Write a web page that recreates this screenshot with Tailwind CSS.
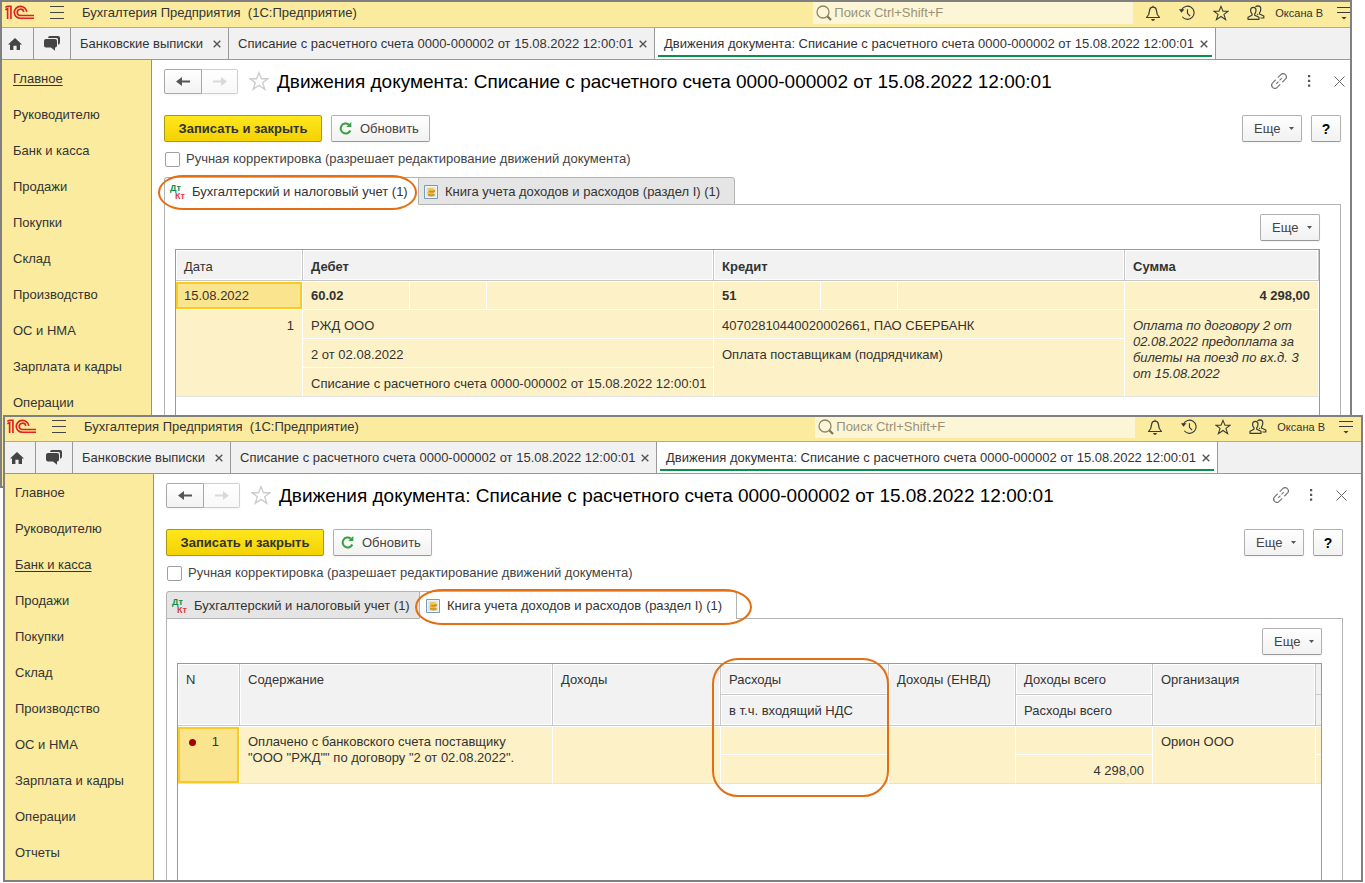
<!DOCTYPE html>
<html lang="ru">
<head>
<meta charset="utf-8">
<meta name="viewport" content="width=device-width, initial-scale=1">
<title>Бухгалтерия Предприятия</title>
<script src="https://cdn.jsdelivr.net/npm/@tailwindcss/browser@4"></script>
</head>
<body class="relative h-screen overflow-hidden bg-white font-['Liberation_Sans',Arial,sans-serif] text-[13px] leading-4 text-[#333]">

<!-- Shared icons -->
<svg class="hidden" aria-hidden="true">
  <symbol id="logo" viewBox="0 0 88 44"><g fill="none" stroke="#e0201f" stroke-width="5"><path d="M1 14 L8 10 V42"/><path d="M1 6 L8 3 H18 V42"/><path d="M66 20 A19 18 0 1 0 47 39.500 H88"/><path d="M57 20 A10 9.500 0 1 0 47 31 H88"/></g></symbol>
  <symbol id="burger" viewBox="0 0 14 13"><path d="M0 .5H14M0 6.500H14M0 12.500H14" stroke="#444" fill="none"/></symbol>
  <symbol id="search" viewBox="0 0 16 16"><circle cx="7" cy="7" r="6" fill="none" stroke="#8f8868" stroke-width="1.300"/><path d="M11.500 11.500L15 15" stroke="#7c7657" stroke-width="2.200"/></symbol>
  <symbol id="bell" viewBox="0 0 16 16"><path d="M8 .8V2.200M1.500 12.500H14.500L12.300 9.500L11.300 5Q10.800 2.200 8 2.200Q5.200 2.200 4.700 5L3.700 9.500Z" fill="none" stroke="#3a3a3a" stroke-width="1.200" stroke-linejoin="round"/><path d="M6 14h4l-1 1.700H7z" fill="#3a3a3a"/></symbol>
  <symbol id="history" viewBox="0 0 17 17"><path d="M2.600 5.500A7 7 0 1 1 3.500 12.500" fill="none" stroke="#3a3a3a" stroke-width="1.200"/><path d="M0 4.500H5.800L2.600 8.200Z" fill="#3a3a3a"/><path d="M9 4.500V8.800L11.800 11.800" fill="none" stroke="#3a3a3a" stroke-width="1.200"/></symbol>
  <symbol id="star" viewBox="0 0 18 18"><path d="M9 1.500L11.200 7H17L12.300 10.500L14.200 16.500L9 12.900L3.800 16.500L5.700 10.500L1 7H6.800Z" fill="none" stroke="currentColor" stroke-width="1.200" stroke-linejoin="miter"/></symbol>
  <symbol id="users" viewBox="0 0 18 16"><g fill="none" stroke="#3a3a3a" stroke-width="1.200" stroke-linejoin="round"><path d="M1 14.300V12.300L5 10.300V9Q3.300 7.200 3.600 4.800Q3.900 2.300 6.300 2.300Q8.800 2.300 9 4.800Q9.200 7.200 7.700 9V10.300L12 12.300V14.300Z"/><path d="M8.500 2Q9.300 .8 11 .8Q13.600 .9 13.800 3.500Q14 6 12.500 7.800V9L16.800 11V13H13.500M10.200 9.800L11 9"/></g></symbol>
  <symbol id="settings" viewBox="0 0 14 14"><path d="M0 1.500H14M0 6.500H14" stroke="#3a3a3a" stroke-width="1.200"/><path d="M4.500 11H9.500L7 13.600Z" fill="#3a3a3a"/></symbol>
  <symbol id="home" viewBox="0 0 14 12"><path d="M7 0L14 6.600H12V12H8.600V7.800H5.400V12H2V6.600H0Z" fill="#444"/></symbol>
  <symbol id="chat" viewBox="0 0 16 15"><path d="M4 2Q4 0 6 0H14Q16 0 16 2V6.500Q16 8.500 14 8.700V3.500Q14 2 12.500 2Z" fill="#444"/><path d="M2 3H11.200Q13 3 13 5V9.500Q13 11.500 11.200 11.500H11V14.800L7 11.500H2Q0 11.500 0 9.500V5Q0 3 2 3Z" fill="#444"/></symbol>
  <symbol id="x" viewBox="0 0 8 8"><path d="M.7 .7L7.300 7.300M7.300 .7L.7 7.300" stroke="#555" stroke-width="1.400"/></symbol>
  <symbol id="bigx" viewBox="0 0 11 11"><path d="M.5 .5L10.500 10.500M10.500 .5L.5 10.500" stroke="#666" stroke-width="1"/></symbol>
  <symbol id="left" viewBox="0 0 14 11"><path d="M14 5.500H4" stroke="currentColor" stroke-width="2"/><path d="M0 5.500L6 1V10Z" fill="currentColor"/></symbol>
  <symbol id="right" viewBox="0 0 14 11"><path d="M0 5.500H10" stroke="currentColor" stroke-width="2"/><path d="M14 5.500L8 1V10Z" fill="currentColor"/></symbol>
  <symbol id="link" viewBox="0 0 16 16"><g fill="none" stroke="#777" stroke-width="1.200" transform="rotate(-45 8 8)"><path d="M6.500 4.800H2.200A3.200 3.200 0 0 0 2.200 11.200H6.500"/><path d="M9.500 4.800H13.800A3.200 3.200 0 0 1 13.800 11.200H9.500"/><path d="M4 8H7.200M8.800 8H12"/></g></symbol>
  <symbol id="dots" viewBox="0 0 4 12"><path d="M1 0h2.200v2.200h-2.200zM1 4.800h2.200v2.200h-2.200zM1 9.600h2.200v2.200h-2.200z" fill="#555"/></symbol>
  <symbol id="refresh" viewBox="0 0 13 13"><path d="M9.800 2.600A5 5 0 1 0 11.300 8.500" fill="none" stroke="#34a13c" stroke-width="2"/><path d="M7.300 4.900H12.300V0Z" fill="#34a13c"/></symbol>
  <symbol id="caret" viewBox="0 0 5 3"><path d="M0 0H5L2.500 3Z" fill="#555"/></symbol>
  <symbol id="book" viewBox="0 0 14 14"><path d="M.5 .5H13.500V13.500H.5Z" fill="#d9e8f3" stroke="#7d9ab0"/><path d="M1.500 1.500H12.500V12.500H1.500Z" fill="none" stroke="#f4f9fc" stroke-width=".8"/><ellipse cx="7.300" cy="9.800" rx="3.600" ry="1.600" fill="#d99a1c"/><ellipse cx="6.600" cy="7.600" rx="3.400" ry="1.500" fill="#eebb3a"/><ellipse cx="7.800" cy="6" rx="3.300" ry="1.500" fill="#cf8f17"/><ellipse cx="6.800" cy="4.400" rx="3.300" ry="1.400" fill="#f3c648"/></symbol>
</svg>

<!-- Rear window: accounting movements -->
<section class="absolute top-0 right-[13px] left-0 flex h-[488px] overflow-hidden border-2 border-[#808080] bg-white">
  <div class="-mr-[9px] flex min-w-0 flex-1 flex-col">
    <header class="flex h-[26px] shrink-0 items-center border-b border-[#b9ac68] bg-[#fbeb9e] pr-2 pb-1 pl-[3px]">
      <svg class="h-[15px] w-[29px]"><use href="#logo"/></svg>
      <button class="ml-4" aria-label="Меню"><svg class="h-[13px] w-[14px]"><use href="#burger"/></svg></button>
      <span class="ml-[18px] whitespace-pre">Бухгалтерия Предприятия  (1С:Предприятие)</span>
      <label class="mr-3 ml-auto flex h-[22px] w-80 items-center gap-[2px] self-start bg-[#fdf6d6] pl-[3px]">
        <svg class="size-4"><use href="#search"/></svg>
        <input type="search" aria-label="Поиск" placeholder="Поиск Ctrl+Shift+F" class="min-w-0 flex-1 bg-transparent outline-none placeholder:text-[#9a9276]">
      </label>
      <div class="flex items-center gap-[18px] text-[#3a3a3a]">
        <button aria-label="Уведомления"><svg class="size-4"><use href="#bell"/></svg></button>
        <button aria-label="История"><svg class="size-4"><use href="#history"/></svg></button>
        <button aria-label="Избранное"><svg class="size-4"><use href="#star"/></svg></button>
        <button aria-label="Пользователи"><svg class="h-4 w-[18px]"><use href="#users"/></svg></button>
      </div>
      <button class="ml-[10px] text-[11px]">Оксана В</button>
      <button class="ml-[14px]" aria-label="Настройки"><svg class="size-[14px]"><use href="#settings"/></svg></button>
    </header>

    <nav class="flex h-8 shrink-0 border-b border-[#999] bg-[#f1f1f1]" aria-label="Открытые окна">
      <button class="flex w-8 items-center justify-center border-r border-[#999] pr-[6px]" aria-label="Начальная страница"><svg class="h-3 w-[14px]"><use href="#home"/></svg></button>
      <button class="flex w-[37px] items-center justify-center border-r border-[#999]" aria-label="Обсуждения"><svg class="h-[15px] w-4"><use href="#chat"/></svg></button>
      <div class="flex w-[158px] items-center justify-between border-r border-[#999] pt-px pr-[7px] pl-[9px]"><a href="#">Банковские выписки</a><button aria-label="Закрыть"><svg class="size-2"><use href="#x"/></svg></button></div>
      <div class="flex w-[426px] items-center justify-between border-r border-[#999] pt-px pr-[7px] pl-[9px] whitespace-nowrap"><a href="#">Списание с расчетного счета 0000-000002 от 15.08.2022 12:00:01</a><button aria-label="Закрыть"><svg class="size-2"><use href="#x"/></svg></button></div>
      <div class="flex w-[561px] flex-col border-r border-[#999] bg-white px-[3px] pb-[2px] whitespace-nowrap">
        <div class="flex flex-1 items-center justify-between border-b-2 border-[#0c8f48] pt-1 pr-1 pl-[6px]"><a href="#">Движения документа: Списание с расчетного счета 0000-000002 от 15.08.2022 12:00:01</a><button aria-label="Закрыть"><svg class="size-2"><use href="#x"/></svg></button></div>
      </div>
    </nav>

    <div class="flex min-h-0 flex-1">
      <nav class="w-[150px] shrink-0 overflow-hidden border-r border-[#9b9461] bg-[#fbeb9e] pt-px pl-[11px]" aria-label="Разделы">
        <ul>
          <li class="flex h-9 items-center"><a href="#" class="underline underline-offset-2">Главное</a></li>
          <li class="flex h-9 items-center"><a href="#">Руководителю</a></li>
          <li class="flex h-9 items-center"><a href="#">Банк и касса</a></li>
          <li class="flex h-9 items-center"><a href="#">Продажи</a></li>
          <li class="flex h-9 items-center"><a href="#">Покупки</a></li>
          <li class="flex h-9 items-center"><a href="#">Склад</a></li>
          <li class="flex h-9 items-center"><a href="#">Производство</a></li>
          <li class="flex h-9 items-center"><a href="#">ОС и НМА</a></li>
          <li class="flex h-9 items-center"><a href="#">Зарплата и кадры</a></li>
          <li class="flex h-9 items-center"><a href="#">Операции</a></li>
        </ul>
      </nav>

      <main class="flex min-w-0 flex-1 flex-col pt-[9px] pr-[18px] pl-3">
        <div class="flex h-6 items-center">
          <div class="flex h-[25px]">
            <button class="flex w-[38px] items-center justify-center rounded-l-[2px] border border-[#a9a9a9] bg-linear-to-b from-white to-[#f2f2f2] text-[#555] shadow-xs" aria-label="Назад"><svg class="h-[11px] w-[14px]"><use href="#left"/></svg></button>
            <button class="flex w-9 items-center justify-center rounded-r-[2px] border border-l-0 border-[#cfcfcf] bg-linear-to-b from-white to-[#f8f8f8] text-[#d9d9d9] shadow-xs" aria-label="Вперед"><svg class="h-[11px] w-[14px]"><use href="#right"/></svg></button>
          </div>
          <button class="ml-[11px] text-[#ccc]" aria-label="В избранное"><svg class="size-5"><use href="#star"/></svg></button>
          <h1 class="ml-2 pt-[2px] text-[19px] leading-6 whitespace-nowrap text-black">Движения документа: Списание с расчетного счета 0000-000002 от 15.08.2022 12:00:01</h1>
          <div class="-mr-1 ml-auto flex items-center">
            <button aria-label="Ссылка"><svg class="size-4"><use href="#link"/></svg></button>
            <button class="ml-5" aria-label="Еще действия"><svg class="h-3 w-1"><use href="#dots"/></svg></button>
            <button class="ml-[23px]" aria-label="Закрыть"><svg class="size-[11px]"><use href="#bigx"/></svg></button>
          </div>
        </div>

        <div class="mt-[22px] flex h-[27px] gap-[9px]">
          <button class="w-[158px] rounded-[2px] border border-[#a99a12] bg-linear-to-b from-[#ffe71c] to-[#f3d200] font-bold shadow-xs">Записать и закрыть</button>
          <button class="flex w-[99px] items-center gap-2 rounded-[2px] border border-[#b0b0b0] border-b-[#999] bg-linear-to-b from-white to-[#f1f1f1] pl-[7px] text-[#444] shadow-xs"><svg class="size-[13px]"><use href="#refresh"/></svg>Обновить</button>
          <button class="ml-auto flex w-[60px] items-center gap-[9px] rounded-[2px] border border-[#b0b0b0] border-b-[#999] bg-linear-to-b from-white to-[#f1f1f1] pl-[11px] text-[#444] shadow-xs">Еще<svg class="h-[3px] w-[5px]"><use href="#caret"/></svg></button>
          <button class="w-[30px] rounded-[2px] border border-[#b0b0b0] border-b-[#999] bg-linear-to-b from-white to-[#f1f1f1] text-sm font-bold text-black shadow-xs" aria-label="Справка">?</button>
        </div>

        <label class="mt-[9px] flex h-4 items-center gap-[6px] self-start pl-px text-[#444]">
          <input type="checkbox" class="size-[15px] appearance-none rounded-[2px] border border-[#a0a0a0] bg-white">
          Ручная корректировка (разрешает редактирование движений документа)
        </label>

        <div class="mt-[10px] -mb-px flex h-7" role="tablist">
          <button role="tab" aria-selected="true" class="relative flex w-[254px] items-center gap-[6px] rounded-tl-[3px] border border-r-0 border-b-0 border-[#b3b3b3] bg-white pl-[5px] whitespace-nowrap">
            <span class="flex w-4 flex-col text-left text-[9px] leading-2 font-bold" aria-hidden="true"><span class="text-[#0c8f48]">Дт</span><span class="pl-[5px] text-[#d63c3c]">Кт</span></span>Бухгалтерский и налоговый учет (1)
            <span class="absolute -top-[3px] right-px -bottom-[5px] -left-[7px] z-10 rounded-[26px/18px] border-2 border-[#e36f12]"></span>
          </button>
          <button role="tab" aria-selected="false" class="flex w-[317px] items-center gap-[7px] rounded-tr-[3px] border border-[#b3b3b3] bg-[#e5e5e5] pt-px pl-[5px] whitespace-nowrap">
            <svg class="size-[14px]"><use href="#book"/></svg>Книга учета доходов и расходов (раздел I) (1)
          </button>
          <span class="flex-1 border-b border-[#b3b3b3]"></span>
        </div>

        <div class="flex min-h-0 flex-1 flex-col border-x border-[#b3b3b3] pt-[10px] pr-5 pl-[10px]">
          <button class="flex h-[27px] w-[60px] shrink-0 items-center gap-[9px] self-end rounded-[2px] border border-[#b0b0b0] border-b-[#999] bg-linear-to-b from-white to-[#f1f1f1] pl-[11px] text-[#444] shadow-xs">Еще<svg class="h-[3px] w-[5px]"><use href="#caret"/></svg></button>
          <div class="mt-2 flex-1 border-x border-t border-[#999]">
            <table class="w-full table-fixed border-separate border-spacing-0 text-left">
              <colgroup><col class="w-[127px]"><col class="w-[107px]"><col class="w-[77px]"><col class="w-[227px]"><col class="w-[107px]"><col class="w-[77px]"><col class="w-[227px]"><col></colgroup>
              <thead>
                <tr class="h-[31px]">
                  <th class="border-r border-b border-[#c8c8c8] bg-[#f2f2f2] px-2 pt-[3px] font-normal inset-ring inset-ring-white">Дата</th>
                  <th colspan="3" class="border-r border-b border-[#c8c8c8] bg-[#f2f2f2] px-2 pt-[3px] inset-ring inset-ring-white">Дебет</th>
                  <th colspan="3" class="border-r border-b border-[#c8c8c8] bg-[#f2f2f2] px-2 pt-[3px] inset-ring inset-ring-white">Кредит</th>
                  <th class="border-r border-b border-[#c8c8c8] bg-[#f2f2f2] px-2 pt-[3px] inset-ring inset-ring-white">Сумма</th>
                </tr>
              </thead>
              <tbody class="[&_td]:border-r [&_td]:border-b [&_td]:border-white [&_td]:bg-[#fdf1c7] [&_td]:px-2">
                <tr class="h-[29px] font-bold [&_td]:border-t">
                  <td class="font-normal inset-ring-2 inset-ring-[#f9ca24] bg-[#fbe48e]!">15.08.2022</td>
                  <td>60.02</td><td></td><td></td>
                  <td>51</td><td></td><td></td>
                  <td class="text-right">4 298,00</td>
                </tr>
                <tr class="h-[29px]">
                  <td rowspan="3" class="border-b-[#e2e2e2]! pt-2 text-right align-top">1</td>
                  <td colspan="3" class="pt-2 align-top">РЖД ООО</td>
                  <td colspan="3" class="pt-2 align-top">40702810440020002661, ПАО СБЕРБАНК</td>
                  <td rowspan="3" class="border-b-[#e2e2e2]! pt-2 align-top italic">Оплата по договору 2 от 02.08.2022 предоплата за билеты на поезд по вх.д. 3 от 15.08.2022</td>
                </tr>
                <tr class="h-[29px]">
                  <td colspan="3" class="pt-2 align-top">2 от 02.08.2022</td>
                  <td colspan="3" rowspan="2" class="border-b-[#e2e2e2]! pt-2 align-top">Оплата поставщикам (подрядчикам)</td>
                </tr>
                <tr class="h-[29px]">
                  <td colspan="3" class="border-b-[#e2e2e2]! pt-2 align-top whitespace-nowrap">Списание с расчетного счета 0000-000002 от 15.08.2022 12:00:01</td>
                </tr>
              </tbody>
            </table>
          </div>
        </div>
      </main>
    </div>
  </div>
</section>

<!-- Front window: income and expense book -->
<section class="absolute top-[415px] right-[2px] bottom-px left-[3px] z-20 flex overflow-hidden border-2 border-[#808080] bg-white">
  <div class="-mt-px -ml-px flex min-w-0 flex-1 flex-col">
    <header class="flex h-[26px] shrink-0 items-center border-b border-[#b9ac68] bg-[#fbeb9e] pr-2 pb-1 pl-[3px]">
      <svg class="h-[15px] w-[29px]"><use href="#logo"/></svg>
      <button class="ml-4" aria-label="Меню"><svg class="h-[13px] w-[14px]"><use href="#burger"/></svg></button>
      <span class="ml-[18px] whitespace-pre">Бухгалтерия Предприятия  (1С:Предприятие)</span>
      <label class="mr-3 ml-auto flex h-[22px] w-80 items-center gap-[2px] self-start bg-[#fdf6d6] pl-[3px]">
        <svg class="size-4"><use href="#search"/></svg>
        <input type="search" aria-label="Поиск" placeholder="Поиск Ctrl+Shift+F" class="min-w-0 flex-1 bg-transparent outline-none placeholder:text-[#9a9276]">
      </label>
      <div class="flex items-center gap-[18px] text-[#3a3a3a]">
        <button aria-label="Уведомления"><svg class="size-4"><use href="#bell"/></svg></button>
        <button aria-label="История"><svg class="size-4"><use href="#history"/></svg></button>
        <button aria-label="Избранное"><svg class="size-4"><use href="#star"/></svg></button>
        <button aria-label="Пользователи"><svg class="h-4 w-[18px]"><use href="#users"/></svg></button>
      </div>
      <button class="ml-[10px] text-[11px]">Оксана В</button>
      <button class="ml-[14px]" aria-label="Настройки"><svg class="size-[14px]"><use href="#settings"/></svg></button>
    </header>

    <nav class="flex h-8 shrink-0 border-b border-[#999] bg-[#f1f1f1]" aria-label="Открытые окна">
      <button class="flex w-8 items-center justify-center border-r border-[#999] pr-[6px]" aria-label="Начальная страница"><svg class="h-3 w-[14px]"><use href="#home"/></svg></button>
      <button class="flex w-[37px] items-center justify-center border-r border-[#999]" aria-label="Обсуждения"><svg class="h-[15px] w-4"><use href="#chat"/></svg></button>
      <div class="flex w-[158px] items-center justify-between border-r border-[#999] pt-px pr-[7px] pl-[9px]"><a href="#">Банковские выписки</a><button aria-label="Закрыть"><svg class="size-2"><use href="#x"/></svg></button></div>
      <div class="flex w-[426px] items-center justify-between border-r border-[#999] pt-px pr-[7px] pl-[9px] whitespace-nowrap"><a href="#">Списание с расчетного счета 0000-000002 от 15.08.2022 12:00:01</a><button aria-label="Закрыть"><svg class="size-2"><use href="#x"/></svg></button></div>
      <div class="flex w-[561px] flex-col border-r border-[#999] bg-white px-[3px] pb-[2px] whitespace-nowrap">
        <div class="flex flex-1 items-center justify-between border-b-2 border-[#0c8f48] pt-1 pr-1 pl-[6px]"><a href="#">Движения документа: Списание с расчетного счета 0000-000002 от 15.08.2022 12:00:01</a><button aria-label="Закрыть"><svg class="size-2"><use href="#x"/></svg></button></div>
      </div>
    </nav>

    <div class="flex min-h-0 flex-1">
      <nav class="w-[150px] shrink-0 overflow-hidden border-r border-[#9b9461] bg-[#fbeb9e] pt-px pl-[11px]" aria-label="Разделы">
        <ul>
          <li class="flex h-9 items-center"><a href="#">Главное</a></li>
          <li class="flex h-9 items-center"><a href="#">Руководителю</a></li>
          <li class="flex h-9 items-center"><a href="#" class="underline underline-offset-2">Банк и касса</a></li>
          <li class="flex h-9 items-center"><a href="#">Продажи</a></li>
          <li class="flex h-9 items-center"><a href="#">Покупки</a></li>
          <li class="flex h-9 items-center"><a href="#">Склад</a></li>
          <li class="flex h-9 items-center"><a href="#">Производство</a></li>
          <li class="flex h-9 items-center"><a href="#">ОС и НМА</a></li>
          <li class="flex h-9 items-center"><a href="#">Зарплата и кадры</a></li>
          <li class="flex h-9 items-center"><a href="#">Операции</a></li>
          <li class="flex h-9 items-center"><a href="#">Отчеты</a></li>
        </ul>
      </nav>

      <main class="flex min-w-0 flex-1 flex-col pt-[9px] pr-[18px] pl-3">
        <div class="flex h-6 items-center">
          <div class="flex h-[25px]">
            <button class="flex w-[38px] items-center justify-center rounded-l-[2px] border border-[#a9a9a9] bg-linear-to-b from-white to-[#f2f2f2] text-[#555] shadow-xs" aria-label="Назад"><svg class="h-[11px] w-[14px]"><use href="#left"/></svg></button>
            <button class="flex w-9 items-center justify-center rounded-r-[2px] border border-l-0 border-[#cfcfcf] bg-linear-to-b from-white to-[#f8f8f8] text-[#d9d9d9] shadow-xs" aria-label="Вперед"><svg class="h-[11px] w-[14px]"><use href="#right"/></svg></button>
          </div>
          <button class="ml-[11px] text-[#ccc]" aria-label="В избранное"><svg class="size-5"><use href="#star"/></svg></button>
          <h1 class="ml-2 pt-[2px] text-[19px] leading-6 whitespace-nowrap text-black">Движения документа: Списание с расчетного счета 0000-000002 от 15.08.2022 12:00:01</h1>
          <div class="-mr-1 ml-auto flex items-center">
            <button aria-label="Ссылка"><svg class="size-4"><use href="#link"/></svg></button>
            <button class="ml-5" aria-label="Еще действия"><svg class="h-3 w-1"><use href="#dots"/></svg></button>
            <button class="ml-[23px]" aria-label="Закрыть"><svg class="size-[11px]"><use href="#bigx"/></svg></button>
          </div>
        </div>

        <div class="mt-[22px] flex h-[27px] gap-[9px]">
          <button class="w-[158px] rounded-[2px] border border-[#a99a12] bg-linear-to-b from-[#ffe71c] to-[#f3d200] font-bold shadow-xs">Записать и закрыть</button>
          <button class="flex w-[99px] items-center gap-2 rounded-[2px] border border-[#b0b0b0] border-b-[#999] bg-linear-to-b from-white to-[#f1f1f1] pl-[7px] text-[#444] shadow-xs"><svg class="size-[13px]"><use href="#refresh"/></svg>Обновить</button>
          <button class="ml-auto flex w-[60px] items-center gap-[9px] rounded-[2px] border border-[#b0b0b0] border-b-[#999] bg-linear-to-b from-white to-[#f1f1f1] pl-[11px] text-[#444] shadow-xs">Еще<svg class="h-[3px] w-[5px]"><use href="#caret"/></svg></button>
          <button class="w-[30px] rounded-[2px] border border-[#b0b0b0] border-b-[#999] bg-linear-to-b from-white to-[#f1f1f1] text-sm font-bold text-black shadow-xs" aria-label="Справка">?</button>
        </div>

        <label class="mt-[9px] flex h-4 items-center gap-[6px] self-start pl-px text-[#444]">
          <input type="checkbox" class="size-[15px] appearance-none rounded-[2px] border border-[#a0a0a0] bg-white">
          Ручная корректировка (разрешает редактирование движений документа)
        </label>

        <div class="mt-[10px] -mb-px flex h-7" role="tablist">
          <button role="tab" aria-selected="false" class="flex w-[254px] items-center gap-[6px] rounded-tl-[3px] border border-[#b3b3b3] bg-[#e5e5e5] pt-px pl-[5px] whitespace-nowrap">
            <span class="flex w-4 flex-col text-left text-[9px] leading-2 font-bold" aria-hidden="true"><span class="text-[#0c8f48]">Дт</span><span class="pl-[5px] text-[#d63c3c]">Кт</span></span>Бухгалтерский и налоговый учет (1)
          </button>
          <button role="tab" aria-selected="true" class="relative flex w-[317px] items-center gap-[7px] rounded-tr-[3px] border border-b-0 border-l-0 border-[#b3b3b3] bg-white pl-[6px] whitespace-nowrap">
            <svg class="size-[14px]"><use href="#book"/></svg>Книга учета доходов и расходов (раздел I) (1)
            <span class="absolute -top-[3px] -right-4 -bottom-[6px] -left-[5px] z-10 rounded-[28px/18px] border-2 border-[#e36f12]"></span>
          </button>
          <span class="flex-1 border-b border-[#b3b3b3]"></span>
        </div>

        <div class="flex min-h-0 flex-1 flex-col border-x border-[#b3b3b3] pt-[10px] pr-5 pl-[10px]">
          <button class="flex h-[27px] w-[60px] shrink-0 items-center gap-[9px] self-end rounded-[2px] border border-[#b0b0b0] border-b-[#999] bg-linear-to-b from-white to-[#f1f1f1] pl-[11px] text-[#444] shadow-xs">Еще<svg class="h-[3px] w-[5px]"><use href="#caret"/></svg></button>
          <div class="mt-2 flex-1 border-x border-t border-[#999]">
            <table class="w-full table-fixed border-separate border-spacing-0 text-left">
              <colgroup><col class="w-[62px]"><col class="w-[313px]"><col class="w-[168px]"><col class="w-[168px]"><col class="w-[127px]"><col class="w-[137px]"><col><col class="w-[5px]"></colgroup>
              <thead class="[&_th]:border-r [&_th]:border-b [&_th]:border-[#c8c8c8] [&_th]:bg-[#f2f2f2] [&_th]:px-2 [&_th]:pt-2 [&_th]:align-top [&_th]:font-normal [&_th]:inset-ring [&_th]:inset-ring-white">
                <tr class="h-[31px]">
                  <th rowspan="2">N</th>
                  <th rowspan="2">Содержание</th>
                  <th rowspan="2">Доходы</th>
                  <th class="relative">Расходы<span class="absolute -top-[6px] -right-px -left-[9px] z-10 h-[139px] rounded-[26px] border-2 border-[#e36f12]"></span></th>
                  <th rowspan="2">Доходы (ЕНВД)</th>
                  <th>Доходы всего</th>
                  <th rowspan="2">Организация</th>
                  <td class="border-b border-[#c8c8c8] bg-[#f2f2f2]"></td>
                </tr>
                <tr class="h-[31px]">
                  <th>в т.ч. входящий НДС</th>
                  <th>Расходы всего</th>
                  <td class="border-b border-[#c8c8c8] bg-[#f2f2f2]"></td>
                </tr>
              </thead>
              <tbody class="[&_td]:border-r [&_td]:border-b [&_td]:border-white [&_td]:bg-[#fdf1c7] [&_td]:align-top">
                <tr class="h-[29px] [&_td]:border-t [&_td]:pt-[7px]">
                  <td rowspan="2" class="border-b-[#e2e2e2]! bg-[#fbe48e]! inset-ring-2 inset-ring-[#f9ca24]"><div class="flex items-center justify-between pr-5 pl-[11px]"><span class="size-[7px] rounded-full bg-[#a00000]"></span>1</div></td>
                  <td rowspan="2" class="border-b-[#e2e2e2]! px-2">Оплачено с банковского счета поставщику<br>"ООО "РЖД"" по договору "2 от 02.08.2022".</td>
                  <td rowspan="2" class="border-b-[#e2e2e2]!"></td>
                  <td></td>
                  <td rowspan="2" class="border-b-[#e2e2e2]!"></td>
                  <td></td>
                  <td rowspan="2" class="border-b-[#e2e2e2]! px-2">Орион ООО</td>
                  <td class="border-r-0!"></td>
                </tr>
                <tr class="h-[29px]">
                  <td class="border-b-[#e2e2e2]!"></td>
                  <td class="border-b-[#e2e2e2]! px-2 pt-2 text-right">4 298,00</td>
                  <td class="border-r-0! border-b-[#e2e2e2]!"></td>
                </tr>
              </tbody>
            </table>
          </div>
        </div>
      </main>
    </div>
  </div>
</section>
</body>
</html>
